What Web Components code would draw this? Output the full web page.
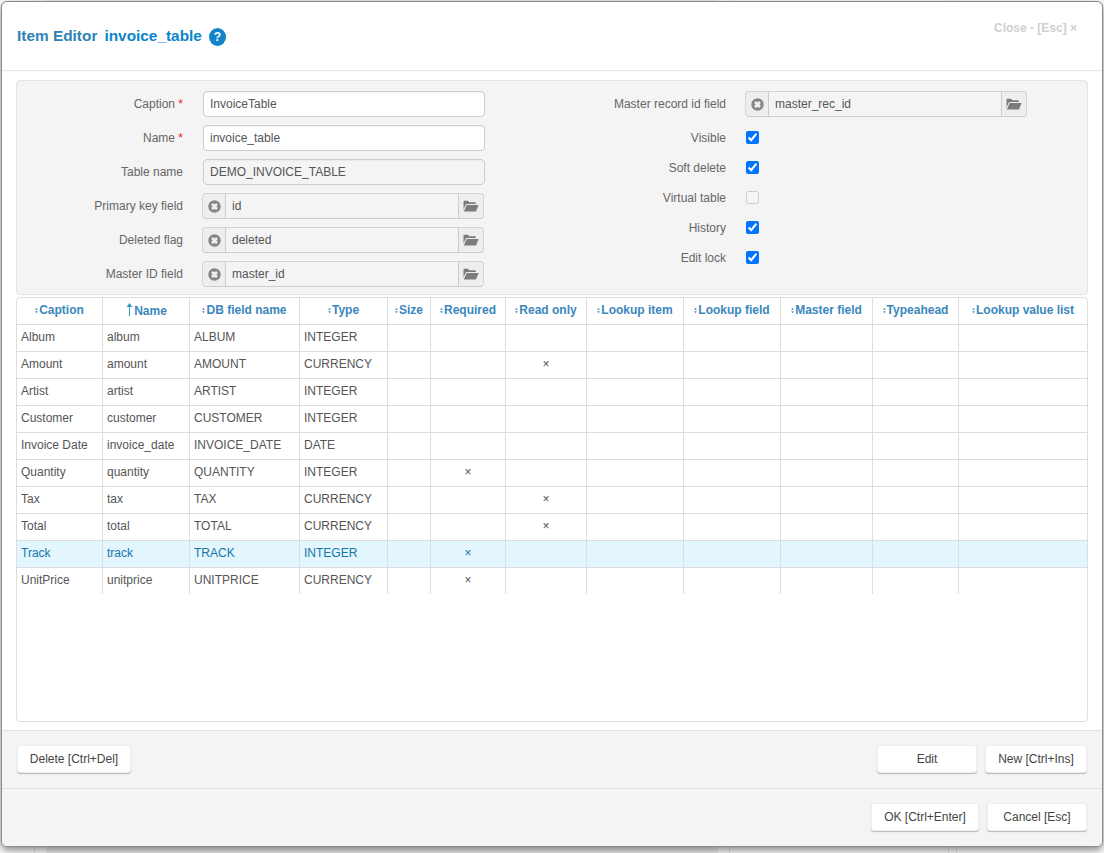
<!DOCTYPE html>
<html>
<head>
<meta charset="utf-8">
<title>Item Editor</title>
<style>
	html, body {
		margin: 0;
		height: 100%;
	}
	body {
		overflow: hidden;
		font: 12px "Liberation Sans", Arial, sans-serif;
		color: #555;
		background:
			linear-gradient( #e8e8e8, #e8e8e8 ) 34px 0 / 1px 100% no-repeat,
			linear-gradient( #f0f0f0, #f0f0f0 ) 46px 0 / 672px 100% no-repeat,
			linear-gradient( #e8e8e8, #e8e8e8 ) 729px 0 / 1px 100% no-repeat,
			linear-gradient( #e8e8e8, #e8e8e8 ) 948px 0 / 1px 100% no-repeat,
			linear-gradient( #e8e8e8, #e8e8e8 ) 956px 0 / 1px 100% no-repeat,
			#fff;
	}
</style>
</head>
<body>

<ie-modal>
	<span slot="title">Item Editor</span>
	<span slot="name">invoice_table</span>

	<ie-panel>
		<div slot="left">
			<ie-field label="Caption" required><ie-textbox>InvoiceTable</ie-textbox></ie-field>
			<ie-field label="Name" required><ie-textbox>invoice_table</ie-textbox></ie-field>
			<ie-field label="Table name"><ie-textbox readonly>DEMO_INVOICE_TABLE</ie-textbox></ie-field>
			<ie-field label="Primary key field"><ie-lookup class="shift">id</ie-lookup></ie-field>
			<ie-field label="Deleted flag"><ie-lookup class="shift">deleted</ie-lookup></ie-field>
			<ie-field label="Master ID field"><ie-lookup class="shift">master_id</ie-lookup></ie-field>
		</div>
		<div slot="right">
			<ie-field side="right" label="Master record id field"><ie-lookup>master_rec_id</ie-lookup></ie-field>
			<ie-field side="right" check label="Visible"><input type="checkbox" checked></ie-field>
			<ie-field side="right" check label="Soft delete"><input type="checkbox" checked></ie-field>
			<ie-field side="right" check label="Virtual table"><input type="checkbox" disabled></ie-field>
			<ie-field side="right" check label="History"><input type="checkbox" checked></ie-field>
			<ie-field side="right" check label="Edit lock"><input type="checkbox" checked></ie-field>
		</div>
	</ie-panel>

	<ie-grid></ie-grid>

	<ie-button slot="actions-left" width="114">Delete [Ctrl+Del]</ie-button>
	<ie-button slot="actions-right" width="100">Edit</ie-button>
	<ie-button slot="actions-right" width="102">New [Ctrl+Ins]</ie-button>

	<ie-button slot="footer" width="108">OK [Ctrl+Enter]</ie-button>
	<ie-button slot="footer" width="100">Cancel [Esc]</ie-button>
</ie-modal>

<script>
class IEModal extends HTMLElement {
	constructor() {
		super()
		this.attachShadow( { mode: 'open' } )
		this.shadowRoot.innerHTML = `
			<style>
				:host {
					display: block;
					box-sizing: border-box;
					width: 1102px;
					height: 846px;
					margin: 1px 0 0 1px;
					border: 1px solid #8c8c8c;
					border-radius: 6px;
					background: #fff;
					box-shadow: 0 3px 9px rgba(0,0,0,.5);
					overflow: hidden;
				}
				.header {
					box-sizing: border-box;
					height: 69px;
					border-bottom: 1px solid #e5e5e5;
					padding: 25px 25px 0 15px;
					display: flex;
					align-items: flex-start;
				}
				.title {
					font-size: 15.4px;
					font-weight: bold;
					line-height: 18px;
					color: #2f82b5;
				}
				.name {
					font-size: 15.4px;
					font-weight: bold;
					line-height: 18px;
					color: #0b85c9;
					margin-left: 7px;
				}
				.help {
					width: 17px;
					height: 18px;
					margin: 1px 0 0 7px;
					border-radius: 50%;
					background: #1384c9;
					color: #fff;
					font-size: 12px;
					font-weight: bold;
					line-height: 18px;
					text-align: center;
				}
				.close {
					margin: -8px 0 0 auto;
					font-size: 12px;
					font-weight: bold;
					line-height: 18px;
					color: #cfcfcf;
				}
				.body {
					box-sizing: border-box;
					height: 659px;
					padding: 9px 14px 8px;
				}
				.bar {
					box-sizing: border-box;
					height: 58px;
					border-top: 1px solid #e2e2e2;
					background: #f4f4f4;
					padding: 14px 15px 0;
					display: flex;
					justify-content: space-between;
				}
				.group {
					display: flex;
					gap: 8px;
				}
				.footer {
					justify-content: flex-end;
					gap: 8px;
				}
			</style>
			<div class="header">
				<span class="title"><slot name="title"></slot></span>
				<span class="name"><slot name="name"></slot></span>
				<span class="help">?</span>
				<span class="close">Close - [Esc] ×</span>
			</div>
			<div class="body"><slot></slot></div>
			<div class="bar">
				<div class="group"><slot name="actions-left"></slot></div>
				<div class="group"><slot name="actions-right"></slot></div>
			</div>
			<div class="bar footer"><slot name="footer"></slot></div>
		`
	}
}
customElements.define( 'ie-modal', IEModal )

class IEPanel extends HTMLElement {
	constructor() {
		super()
		this.attachShadow( { mode: 'open' } )
		this.shadowRoot.innerHTML = `
			<style>
				:host {
					display: flex;
					box-sizing: border-box;
					height: 215px;
					margin-bottom: 2px;
					padding-top: 10px;
					background: #f4f4f4;
					border: 1px solid #e4e4e4;
					border-radius: 4px;
				}
				.left { width: 559px; }
				.right { flex: 1; }
			</style>
			<div class="left"><slot name="left"></slot></div>
			<div class="right"><slot name="right"></slot></div>
		`
	}
}
customElements.define( 'ie-panel', IEPanel )

class IEField extends HTMLElement {
	constructor() {
		super()
		this.attachShadow( { mode: 'open' } )
	}

	connectedCallback() {
		const right = this.getAttribute( 'side' ) === 'right'
		const check = this.hasAttribute( 'check' )
		const star = this.hasAttribute( 'required' ) ? ' <b>*</b>' : ''
		this.shadowRoot.innerHTML = `
			<style>
				:host {
					display: flex;
					align-items: center;
					height: ${ check ? 30 : 26 }px;
					margin-bottom: ${ right ? ( check ? 0 : 5 ) : 8 }px;
				}
				.label {
					width: ${ right ? 150 : 166 }px;
					margin-right: ${ right ? 19 : 20 }px;
					padding-top: ${ check ? 2 : 0 }px;
					text-align: right;
					color: #666;
					flex: none;
				}
				b {
					font-weight: normal;
					color: #e8212b;
				}
				.control {
					display: flex;
					align-items: center;
				}
				::slotted(input) {
					margin: 0 0 0 1px;
					width: 13px;
					height: 13px;
				}
			</style>
			<div class="label">${ this.getAttribute( 'label' ) }${ star }</div>
			<div class="control"><slot></slot></div>
		`
	}
}
customElements.define( 'ie-field', IEField )

class IETextbox extends HTMLElement {
	constructor() {
		super()
		this.attachShadow( { mode: 'open' } )
		this.shadowRoot.innerHTML = `
			<style>
				:host {
					display: block;
					box-sizing: border-box;
					width: 282px;
					height: 26px;
					padding: 0 6px;
					line-height: 24px;
					color: #555;
					background: #fff;
					border: 1px solid #ccc;
					border-radius: 4px;
					box-shadow: inset 0 1px 1px rgba(0,0,0,.04);
				}
				:host([readonly]) {
					background: #f4f4f4;
				}
			</style>
			<slot></slot>
		`
	}
}
customElements.define( 'ie-textbox', IETextbox )

class IELookup extends HTMLElement {
	constructor() {
		super()
		this.attachShadow( { mode: 'open' } )
		this.shadowRoot.innerHTML = `
			<style>
				:host {
					display: flex;
					box-sizing: border-box;
					width: 282px;
					height: 26px;
					border: 1px solid #d4d4d4;
					border-bottom-color: #ccc;
					border-radius: 4px;
					background: #eee;
					line-height: 24px;
					color: #555;
				}
				/* in the left column the lookups sit one pixel out from the text boxes */
				:host(.shift) {
					margin-left: -1px;
				}
				.clear, .open {
					display: flex;
					align-items: center;
					justify-content: center;
					flex: none;
				}
				.clear {
					width: 22px;
					border-right: 1px solid #ccc;
				}
				.open {
					width: 24px;
					border-left: 1px solid #ccc;
				}
				.text {
					flex: 1;
					padding: 0 6px;
					background: #f4f4f4;
				}
				svg { display: block; }
			</style>
			<span class="clear">
				<svg width="13" height="13" viewBox="0 0 13 13">
					<circle cx="6.5" cy="6.5" r="6.2" fill="#858585"/>
					<path d="M4.9 4.9 8.1 8.1M8.1 4.9 4.9 8.1" stroke="#ececec" stroke-width="3" stroke-linecap="round"/>
				</svg>
			</span>
			<span class="text"><slot></slot></span>
			<span class="open">
				<svg width="16" height="12" viewBox="0 0 16 12">
					<path d="M.5 9.6V1.8C.5 1.2.9.8 1.5.8H5l1.2 1.4h5.6c.6 0 1 .4 1 1V4H4C3.3 4 2.9 4.3 2.6 4.8Z" fill="#7c7c7c"/>
					<path d="M3.6 5H15.6L13 11.4H.8Z" fill="#7c7c7c"/>
				</svg>
			</span>
		`
	}
}
customElements.define( 'ie-lookup', IELookup )

const COLUMNS = [
	[ 'Caption', 86 ], [ 'Name', 87 ], [ 'DB field name', 110 ], [ 'Type', 88 ],
	[ 'Size', 43 ], [ 'Required', 75 ], [ 'Read only', 81 ], [ 'Lookup item', 97 ],
	[ 'Lookup field', 97 ], [ 'Master field', 92 ], [ 'Typeahead', 86 ], [ 'Lookup value list', 128 ],
]

// caption, name, db field, type, required, read only
const FIELDS = [
	[ 'Album', 'album', 'ALBUM', 'INTEGER', '', '' ],
	[ 'Amount', 'amount', 'AMOUNT', 'CURRENCY', '', '×' ],
	[ 'Artist', 'artist', 'ARTIST', 'INTEGER', '', '' ],
	[ 'Customer', 'customer', 'CUSTOMER', 'INTEGER', '', '' ],
	[ 'Invoice Date', 'invoice_date', 'INVOICE_DATE', 'DATE', '', '' ],
	[ 'Quantity', 'quantity', 'QUANTITY', 'INTEGER', '×', '' ],
	[ 'Tax', 'tax', 'TAX', 'CURRENCY', '', '×' ],
	[ 'Total', 'total', 'TOTAL', 'CURRENCY', '', '×' ],
	[ 'Track', 'track', 'TRACK', 'INTEGER', '×', '' ],
	[ 'UnitPrice', 'unitprice', 'UNITPRICE', 'CURRENCY', '×', '' ],
]

class IEGrid extends HTMLElement {
	constructor() {
		super()
		this.attachShadow( { mode: 'open' } )
		const sortIcon = `<svg class="sort" width="3" height="7" viewBox="0 0 3 7"><path d="M1.5 .8 2.8 2.8H.2ZM1.5 6.2 2.8 4.2H.2Z" fill="currentColor"/></svg>`
		const upIcon = `<svg class="up" width="7" height="13" viewBox="0 0 7 13"><path d="M3.5 0 6.4 4H4V13H3V4H.6Z" fill="#2b9ac4"/></svg>`
		const head = COLUMNS.map( ( [ title ] ) => {
			const sorted = title === 'Name'
			return `<th class="${ sorted ? 'sorted' : '' }"><span>${ sorted ? upIcon : sortIcon }${ title }</span></th>`
		} ).join( '' )
		const rows = FIELDS.map( f => {
			const [ caption, name, db, type, required, readOnly ] = f
			return `
				<tr class="${ caption === 'Track' ? 'selected' : '' }">
					<td>${ caption }</td><td>${ name }</td><td>${ db }</td><td>${ type }</td><td></td>
					<td class="c">${ required }</td><td class="c">${ readOnly }</td>
					<td></td><td></td><td></td><td></td><td></td>
				</tr>`
		} ).join( '' )
		this.shadowRoot.innerHTML = `
			<style>
				:host {
					display: block;
					box-sizing: border-box;
					height: 425px;
					border: 1px solid #ddd;
					border-radius: 4px;
					background: #fff;
					overflow: hidden;
				}
				table {
					table-layout: fixed;
					width: 1070px;
					border-collapse: separate;
					border-spacing: 0;
				}
				th, td {
					box-sizing: border-box;
					height: 27px;
					padding: 0 4px 2px;
					border-right: 1px solid #ddd;
					border-bottom: 1px solid #ddd;
					white-space: nowrap;
					overflow: hidden;
				}
				th:last-child, td:last-child { border-right: 0; }
				tbody tr:last-child td { border-bottom: 0; height: 26px; }
				th {
					color: #3a87bd;
					font-weight: bold;
					text-align: center;
				}
				th.sorted { padding-bottom: 0; padding-top: 1px; }
				th span {
					display: inline-flex;
					align-items: center;
					gap: 1px;
				}
				.up { margin: -3px 0 0 1px; }
				td { color: #555; }
				td.c { text-align: center; padding: 0 0 2px; }
				.selected td {
					background: #e3f5fd;
					color: #1278a8;
				}
			</style>
			<table>
				<colgroup>${ COLUMNS.map( c => `<col style="width:${ c[1] }px">` ).join( '' ) }</colgroup>
				<thead><tr>${ head }</tr></thead>
				<tbody>${ rows }</tbody>
			</table>
		`
	}
}
customElements.define( 'ie-grid', IEGrid )

class IEButton extends HTMLElement {
	constructor() {
		super()
		this.attachShadow( { mode: 'open' } )
	}

	connectedCallback() {
		this.shadowRoot.innerHTML = `
			<style>
				:host {
					display: block;
					box-sizing: border-box;
					width: ${ this.getAttribute( 'width' ) }px;
					height: 28px;
					line-height: 26px;
					text-align: center;
					color: #444;
					background: #fff;
					border: 1px solid #eee;
					border-radius: 3px;
					box-shadow: 0 1px 1px rgba(0,0,0,.25);
				}
			</style>
			<slot></slot>
		`
	}
}
customElements.define( 'ie-button', IEButton )
</script>
</body>
</html>
